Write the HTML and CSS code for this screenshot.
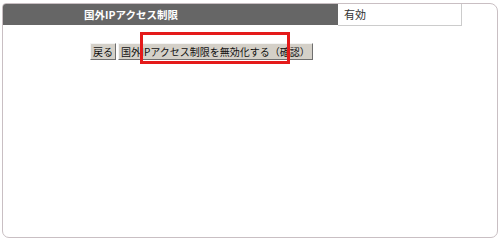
FILE: index.html
```html
<html>
<head>
<meta charset="utf-8">
<link rel="stylesheet" href="styles.css">
</head>
<body>
<div class="frame">
    <div class="row">
        <div class="head">国外IPアクセス制限</div>
        <div class="value">有効</div>
    </div>
    <div class="buttons">
        <div class="but">戻る</div>
        <div class="but">国外IPアクセス制限を無効化する（確認）</div>
    </div>
    <div class="mark"></div>
</div>
</body>
</html>
```

FILE: styles.css
```css
body {
    margin: 0;
    font-family: "Noto Sans CJK JP", sans-serif;
    background: #fff;
}
.frame {
    position: relative;
    margin: 3px 2px;
    width: 494px;
    height: 233px;
    border: 1px solid #c9bfc3;
    border-radius: 4px 8px 7px 7px;
}
.row {
    display: flex;
}
.head {
    width: 254px;
    height: 21px;
    line-height: 21px;
    padding-left: 81px;
    background-color: #666666;
    color: #ffffff;
    font-size: 10.5px;
    font-weight: bold;
    border-top-left-radius: 3px;
}
.value {
    width: 117px;
    height: 21px;
    line-height: 21px;
    padding-left: 6px;
    font-size: 11px;
    color: #333333;
    border-right: 1px solid #cccccc;
    border-bottom: 1px solid #cccccc;
}
.buttons {
    display: flex;
    gap: 2px;
    margin-top: 17px;
    padding-left: 87px;
}
.but {
    height: 15px;
    line-height: 15px;
    padding: 0 2px;
    font-size: 10px;
    color: #111111;
    background-color: #d4d0c8;
    border-top: 1px solid #f4f4f4;
    border-left: 1px solid #f4f4f4;
    border-right: 1px solid #6f6f6f;
    border-bottom: 1px solid #6f6f6f;
}
.mark {
    position: absolute;
    left: 137px;
    top: 28px;
    width: 144px;
    height: 26px;
    border: 3px solid #e41a1a;
}
```
